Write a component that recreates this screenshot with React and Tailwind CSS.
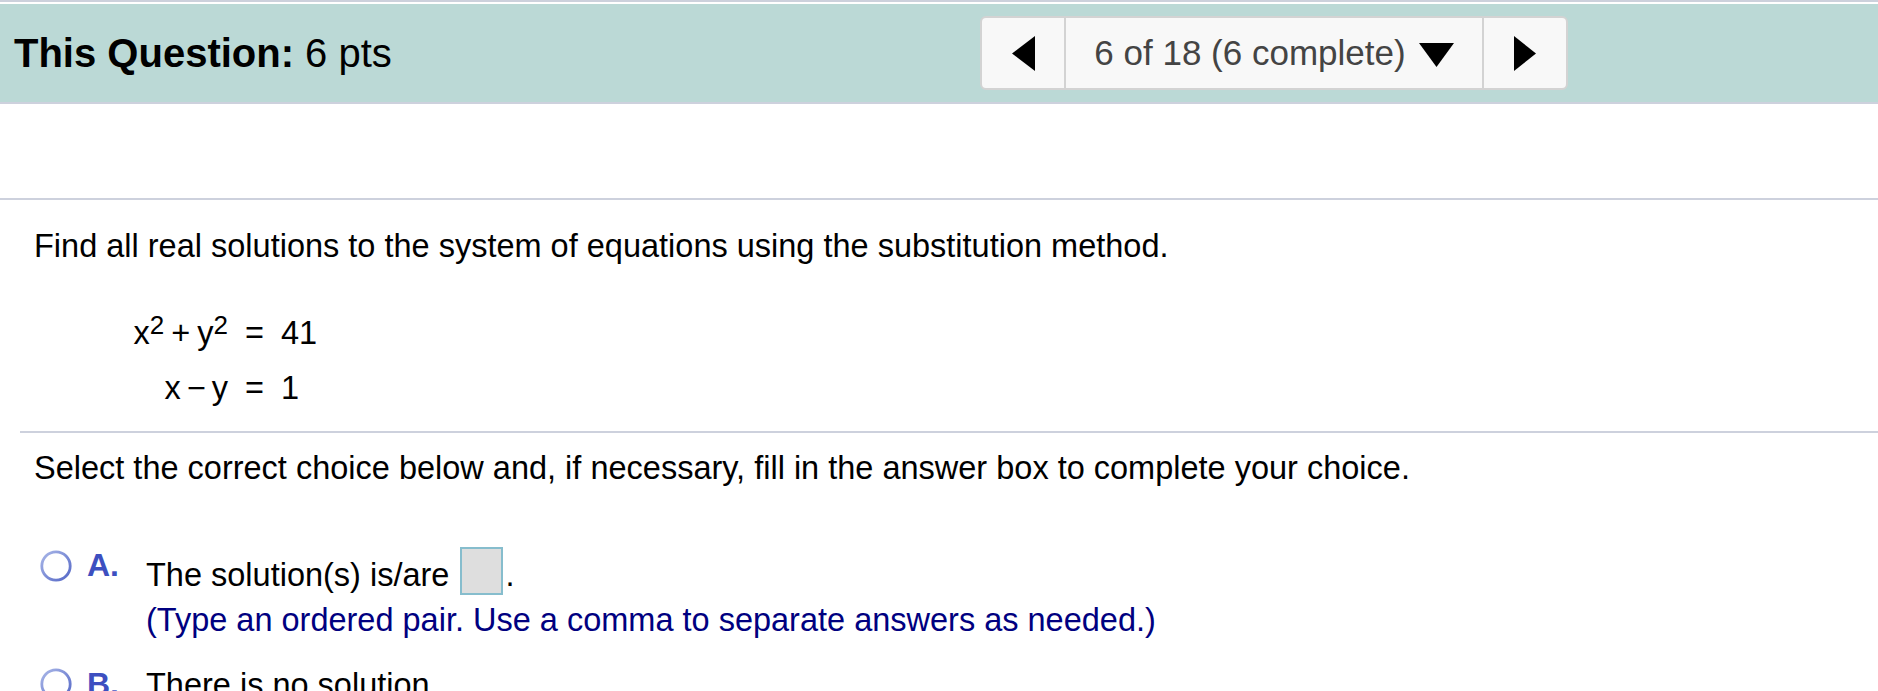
function Radio() {
  return (
    <svg width="32" height="32" viewBox="0 0 32 32" className="block">
      <defs>
        <linearGradient id="rg" x1="0" y1="0" x2="1" y2="1">
          <stop offset="0" stopColor="#a9b7e8" />
          <stop offset="1" stopColor="#5467c6" />
        </linearGradient>
      </defs>
      <circle cx="16" cy="16" r="14.2" fill="#ffffff" stroke="url(#rg)" strokeWidth="2.8" />
    </svg>
  );
}

export default function App() {
  return (
    <div className="w-[1878px] bg-white font-['Liberation_Sans',Arial,sans-serif] text-black">
      <div className="h-[2px] bg-[#ccd1dc]" />
      <div className="h-[2px] bg-white" />
      <div className="flex h-[98px] items-center bg-[#bbd9d6]">
        <div className="pl-[14px] text-[40px] leading-[46px]">
          <span className="font-bold">This Question:</span> 6 pts
        </div>
        <div className="ml-auto mr-[310px] flex h-[74px] w-[588px] rounded-[6px] border-2 border-[#d3d3d3] bg-[#f8f8f8]">
          <div className="flex w-[82px] items-center justify-center">
            <svg width="23" height="35" viewBox="0 0 23 35">
              <polygon points="23,0 23,35 0,17.5" fill="#000" />
            </svg>
          </div>
          <div className="flex flex-1 items-center justify-center border-x-2 border-[#d3d3d3] text-[35px] leading-[40px] text-[#444]">
            <span>6 of 18 (6 complete)</span>
            <svg width="35" height="24" viewBox="0 0 35 24" className="ml-[13px] mt-[4px]">
              <polygon points="0,0 35,0 17.5,24" fill="#000" />
            </svg>
          </div>
          <div className="flex w-[82px] items-center justify-center">
            <svg width="22" height="35" viewBox="0 0 22 35">
              <polygon points="0,0 22,17.5 0,35" fill="#000" />
            </svg>
          </div>
        </div>
      </div>
      <div className="h-[2px] bg-[#cdd1dd]" />
      <div className="h-[94px]" />
      <div className="h-[2px] bg-[#cdd1dd]" />

      <div className="mt-[28px] pl-[34px] text-[32.5px] leading-[36px]">
        Find all real solutions to the system of equations using the substitution method.
      </div>

      <div className="mt-[42px] ml-[126px] grid grid-cols-[102px_19px_auto] gap-x-[17px] text-[32.5px] leading-[55px]">
        <div className="text-right whitespace-nowrap">
          x<sup className="text-[26px] -top-[10px]">2</sup>
          <span className="mx-[7px]">+</span>y<sup className="text-[26px] -top-[10px]">2</sup>
        </div>
        <div className="text-center">=</div>
        <div>41</div>
        <div className="text-right whitespace-nowrap">
          x<span className="mx-[6px]">−</span>y
        </div>
        <div className="text-center">=</div>
        <div>1</div>
      </div>

      <div className="mt-[15px] ml-[20px] h-[2px] bg-[#cdd1dd]" />

      <div className="mt-[17px] pl-[34px] text-[32.5px] leading-[36px]">
        Select the correct choice below and, if necessary, fill in the answer box to complete your choice.
      </div>

      <div className="mt-[61px] flex">
        <div className="ml-[40px] mt-[3px]">
          <Radio />
        </div>
        <div className="ml-[15px] w-[59px] text-[32px] font-bold leading-[36px] text-[#3d4fc0]">A.</div>
        <div>
          <div className="flex h-[48px] items-end text-[32.5px] leading-[40px]">
            <span>The solution(s) is/are</span>
            <span className="ml-[11px] block h-[48px] w-[43px] border-2 border-[#86bdcd] bg-[#dedede]" />
            <span className="ml-[2px]">.</span>
          </div>
          <div className="mt-[7px] text-[32.5px] leading-[36px] text-[#000080]">
            (Type an ordered pair. Use a comma to separate answers as needed.)
          </div>
        </div>
      </div>

      <div className="mt-[27px] flex pb-[40px]">
        <div className="ml-[40px] mt-[3px]">
          <Radio />
        </div>
        <div className="ml-[15px] mt-[1px] w-[59px] text-[32px] font-bold leading-[36px] text-[#3d4fc0]">B.</div>
        <div className="text-[32.5px] leading-[40px]">There is no solution.</div>
      </div>
    </div>
  );
}
